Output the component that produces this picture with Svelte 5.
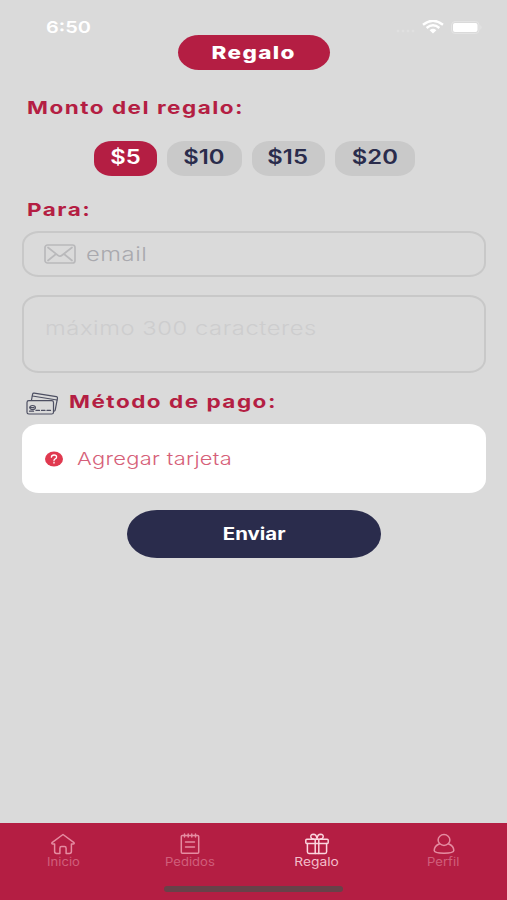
<script lang="ts">
  const amounts = [5, 10, 15, 20];
  const tabs = [
    { id: "inicio", label: "Inicio" },
    { id: "pedidos", label: "Pedidos" },
    { id: "regalo", label: "Regalo" },
    { id: "perfil", label: "Perfil" },
  ];

  let amount = $state(5);
  let activeTab = $state("regalo");
  let email = $state("");
  let message = $state("");
</script>

<div class="screen">
  <header>
    <div class="status">
      <span class="time">6:50</span>
      <div class="signals">
        <svg class="dots" width="20" height="4" viewBox="0 0 20 4">
          <circle cx="3" cy="2" r="1.2" />
          <circle cx="8" cy="2" r="1.2" />
          <circle cx="13" cy="2" r="1.2" />
          <circle cx="18" cy="2" r="1.2" />
        </svg>
        <svg class="wifi" width="22" height="14" viewBox="0 0 22 14">
          <path d="M1 4.8Q11 -3.2 21 4.8" />
          <path d="M4.6 8Q11 2.6 17.4 8" />
          <path class="fill" d="M7.6 10.2Q11 7.4 14.4 10.2L11 13.4Z" />
        </svg>
        <svg class="battery" width="32" height="13" viewBox="0 0 32 13">
          <rect class="case" x="0.5" y="0.5" width="27.5" height="12" rx="3.5" />
          <rect class="level" x="2" y="2" width="24.5" height="9" rx="2" />
          <path class="cap" d="M29.5 4.3q2 2.2 0 4.4z" />
        </svg>
      </div>
    </div>
    <h1><span>Regalo</span></h1>
  </header>

  <main>
    <h2 class="monto"><span>Monto del regalo:</span></h2>
    <div class="amounts">
      {#each amounts as value}
        <button
          class="chip chip-{value}"
          class:selected={amount === value}
          onclick={() => (amount = value)}><span>${value}</span></button
        >
      {/each}
    </div>

    <h2 class="para"><span>Para:</span></h2>
    <label class="field email">
      <svg width="32" height="20" viewBox="0 0 32 20">
        <rect x="1" y="1" width="30" height="18" rx="2.5" />
        <path d="M4 3.5L14 11.3Q16 12.8 18 11.3L28 3.5M4 16.5L12 10M28 16.5L20 10" />
      </svg>
      <input type="email" placeholder="email" bind:value={email} />
    </label>
    <label class="field message">
      <textarea
        maxlength="300"
        placeholder="máximo 300 caracteres"
        bind:value={message}
      ></textarea>
    </label>

    <div class="payment-title">
      <svg width="33" height="23" viewBox="0 0 33 23">
        <path d="M5.5 8L6.6 2.2Q6.9 1 8.2 1.2L30.4 4.6Q31.7 4.9 31.5 6.1L29.2 18.2Q29 19.2 28 19.2" />
        <path d="M6.4 4L31 8" />
        <rect x="1" y="8.6" width="26.5" height="13.4" rx="1.8" />
        <ellipse cx="6.6" cy="15.6" rx="2.8" ry="2.1" />
        <path d="M4 15.6H8M3.5 19.2H7.5M10 18.4H13.5M15.5 18.4H19M21 18.4H24.5" />
      </svg>
      <h2 class="metodo"><span>Método de pago:</span></h2>
    </div>
    <button class="card">
      <svg width="18" height="16" viewBox="0 0 18 16">
        <ellipse cx="9" cy="8" rx="9" ry="7.6" />
        <path d="M6.4 6.2Q6.5 4 9 4Q11.6 4 11.6 6Q11.6 7.2 10.2 7.8Q9 8.3 9 9.4M9 11.1V12.1" />
      </svg>
      <span>Agregar tarjeta</span>
    </button>

    <button class="send"><span>Enviar</span></button>
  </main>

  <nav>
    <div class="tabs">
      {#each tabs as tab}
        <button
          class="tab {tab.id}"
          class:active={activeTab === tab.id}
          onclick={() => (activeTab = tab.id)}
        >
          <svg width="26" height="22" viewBox="0 0 26 22">
            {#if tab.id === "inicio"}
              <path
                d="M13 1.5L2 9.6Q1.4 11 2.8 11H4.6V18.6Q4.6 20.5 6.5 20.5H9.9V15.2Q9.9 13.6 11.5 13.6H14.5Q16.1 13.6 16.1 15.2V20.5H19.5Q21.4 20.5 21.4 18.6V11H23.2Q24.6 11 24 9.6Z"
              />
            {:else if tab.id === "pedidos"}
              <rect x="4.3" y="2.6" width="17.4" height="17.6" rx="1" />
              <path d="M7.5 1V4M11.2 1V4M14.8 1V4M18.5 1V4M8.5 9H17.5M8.5 14H17.5" />
            {:else if tab.id === "regalo"}
              <rect x="1.8" y="6.2" width="22.4" height="4.4" rx="1" />
              <path d="M3.4 10.6V18.8Q3.4 20.5 5 20.5H21Q22.6 20.5 22.6 18.8V10.6" />
              <path d="M11.2 6.2V20.5M14.8 6.2V20.5" />
              <path
                d="M13 6Q12.6 1.3 9.3 1.3Q6.6 1.4 6.8 3.8Q7 6 9.6 6M13 6Q13.4 1.3 16.7 1.3Q19.4 1.4 19.2 3.8Q19 6 16.4 6"
              />
            {:else}
              <ellipse cx="13" cy="7" rx="5.9" ry="5.4" />
              <path
                d="M8.6 10.8Q3.2 13 3.2 17.6Q3.2 20.2 13 20.2Q22.8 20.2 22.8 17.6Q22.8 13 17.4 10.8"
              />
            {/if}
          </svg>
          <span>{tab.label}</span>
        </button>
      {/each}
    </div>
    <div class="home-bar"></div>
  </nav>
</div>

<style>
  :global(body) {
    background: #dadada;
  }

  .screen {
    box-sizing: border-box;
    display: flex;
    flex-direction: column;
    height: 900px;
    background: #dadada;
    color: #b41e43;
    font-family: Inter, "Liberation Sans", sans-serif;
    overflow: hidden;
  }

  /* lettering is extended horizontally throughout the app */
  span {
    display: inline-block;
    white-space: nowrap;
    transform: scaleX(1.25);
  }

  h1,
  h2 {
    margin: 0;
    font-weight: 700;
  }

  h2 {
    font-size: 18px;
    line-height: 22px;
    letter-spacing: 1.2px;
  }

  h2 span {
    transform-origin: left;
  }

  button {
    all: unset;
    box-sizing: border-box;
    display: flex;
    align-items: center;
    justify-content: center;
    cursor: pointer;
  }

  svg {
    flex: none;
    fill: none;
    stroke-linecap: round;
    stroke-linejoin: round;
  }

  header {
    display: flex;
    flex-direction: column;
    align-items: center;
    height: 70px;
  }

  .status {
    box-sizing: border-box;
    display: flex;
    justify-content: space-between;
    align-items: flex-start;
    width: 100%;
    height: 35px;
    padding: 17px 24px 0 46px;
    color: #fff;
  }

  .time {
    font-size: 16.5px;
    font-weight: 600;
    line-height: 20px;
    transform: scaleX(1.21);
    transform-origin: left;
  }

  .signals {
    display: flex;
    align-items: center;
    gap: 7px;
    padding-top: 3px;
  }

  .dots {
    fill: #e1e1e1;
    margin-top: 8px;
  }

  .wifi {
    stroke: #fff;
    stroke-width: 2.4;
    stroke-linecap: butt;
  }

  .wifi .fill {
    fill: #fff;
    stroke: none;
  }

  .case {
    stroke: #e4e4e4;
  }

  .level {
    fill: #fff;
  }

  .cap {
    fill: #e6e6e6;
  }

  h1 {
    display: flex;
    align-items: center;
    justify-content: center;
    width: 152px;
    height: 35px;
    border-radius: 21px / 17.5px;
    background: #b41e43;
    color: #fff;
    font-size: 18px;
    font-weight: 800;
    letter-spacing: 1.1px;
  }

  main {
    display: flex;
    flex-direction: column;
    flex: 1;
    padding: 0 21px 0 21.5px;
  }

  .monto {
    padding: 27px 0 0 5.5px;
  }

  .amounts {
    display: flex;
    gap: 10px;
    padding: 22px 0 0 72px;
  }

  .chip {
    height: 34.5px;
    padding-bottom: 3.5px;
    border-radius: 18px / 14px;
    background: #c9c9c9;
    color: #2a2c4c;
    font-size: 19.5px;
    font-weight: 600;
  }

  .chip.selected {
    background: #b41e43;
    color: #fff;
  }

  .chip span {
    transform: scaleX(1.22);
  }

  .chip-5 {
    width: 63px;
  }

  .chip-10 {
    width: 75px;
  }

  .chip-15 {
    width: 73px;
  }

  .chip-20 {
    width: 80px;
  }

  .para {
    padding: 23.5px 0 0 5.5px;
  }

  .field {
    box-sizing: border-box;
    display: flex;
    border: 2px solid #c8c8c8;
    border-radius: 17px / 14px;
    overflow: hidden;
  }

  .email {
    align-items: center;
    gap: 10px;
    height: 46px;
    margin-top: 10px;
    padding-left: 20.5px;
  }

  .email svg {
    stroke: #b9b9bb;
    stroke-width: 1.7;
  }

  input,
  textarea {
    all: unset;
    width: 320px;
    font-size: 19px;
    font-weight: 300;
    line-height: 24px;
    letter-spacing: 0.45px;
    color: #2a2c4c;
    transform: scaleX(1.25);
    transform-origin: left;
  }

  input {
    padding-top: 1px;
  }

  input::placeholder {
    color: #a9a9ae;
  }

  .message {
    height: 78px;
    margin-top: 17.5px;
    padding: 20px 0 0 21px;
  }

  textarea {
    height: 48px;
  }

  textarea::placeholder {
    color: #cdcdce;
  }

  .payment-title {
    display: flex;
    align-items: center;
    gap: 10px;
    height: 23px;
    padding: 19px 0 0 4px;
  }

  .payment-title svg {
    stroke: #4d4f62;
    stroke-width: 1.2;
  }

  .metodo {
    padding-bottom: 2px;
  }

  .card {
    justify-content: flex-start;
    gap: 14px;
    height: 69px;
    margin-top: 9px;
    padding: 1px 0 0 23.5px;
    border-radius: 17px / 14px;
    background: #fff;
    color: #d65f79;
    font-size: 17.5px;
    font-weight: 300;
    letter-spacing: 0.25px;
  }

  .card svg {
    fill: #e0394f;
  }

  .card path {
    fill: none;
    stroke: #fff;
    stroke-width: 1.3;
  }

  .card span {
    transform-origin: left;
  }

  .send {
    align-self: center;
    width: 254px;
    height: 48px;
    margin-top: 17px;
    padding-top: 1px;
    border-radius: 30px / 24px;
    background: #2a2c4c;
    color: #fff;
    font-size: 17px;
    font-weight: 700;
  }

  .send span {
    transform: scaleX(1.2);
  }

  nav {
    display: flex;
    flex-direction: column;
    align-items: center;
    height: 77px;
    background: #b41e43;
  }

  .tabs {
    display: flex;
    width: 100%;
    height: 63px;
  }

  .tab {
    flex: 1;
    flex-direction: column;
    justify-content: flex-start;
    padding-top: 10px;
    color: #d05f7b;
    font-size: 11.5px;
    line-height: 14px;
  }

  .tab span {
    transform: scaleX(1.14);
  }

  .tab svg {
    stroke: #e58ca1;
    stroke-width: 1.5;
  }

  .tab.active {
    color: #f3bdca;
  }

  .tab.active span {
    transform: scaleX(1.2);
  }

  .tab.active svg {
    stroke: #fbd5de;
  }

  .home-bar {
    width: 179px;
    height: 6px;
    border-radius: 3px;
    background: #684149;
  }
</style>
